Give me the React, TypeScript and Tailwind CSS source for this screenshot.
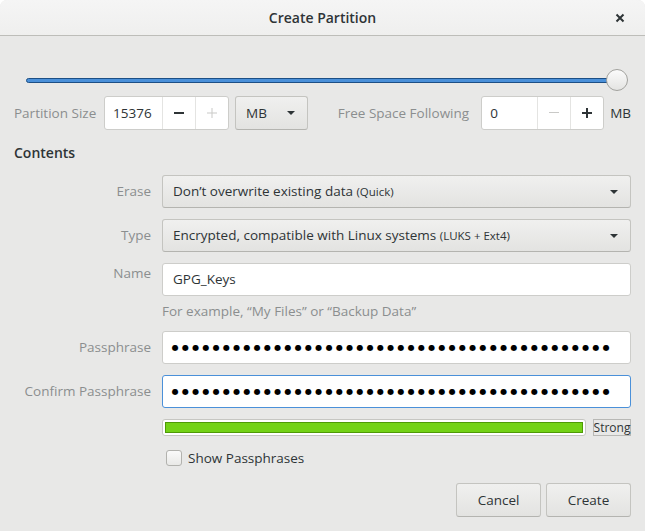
import React from "react";

const font = { fontFamily: '"Open Sans", "Noto Sans", sans-serif' };

function Minus({ dim }: { dim?: boolean }) {
  return (
    <svg width="12" height="12" viewBox="0 0 12 12">
      <rect x="1" y="5" width="10" height={dim ? 1 : 2} fill={dim ? "#c9c9c7" : "#2e3436"} />
    </svg>
  );
}
function Plus({ dim }: { dim?: boolean }) {
  const c = dim ? "#c9c9c7" : "#2e3436";
  const t = dim ? 1 : 2;
  return (
    <svg width="12" height="12" viewBox="0 0 12 12">
      <rect x="1" y={6 - t / 2} width="10" height={t} fill={c} />
      <rect x={6 - t / 2} y="1" width={t} height="10" fill={c} />
    </svg>
  );
}
function Arrow() {
  return (
    <svg width="10" height="6" viewBox="0 0 10 6">
      <path d="M1 1 L9 1 L5 5 Z" fill="#2e3436" />
    </svg>
  );
}

function Spin({ value, minusDim, plusDim, entryW }: { value: string; minusDim?: boolean; plusDim?: boolean; entryW: string }) {
  return (
    <div className="flex h-[34px] rounded-[3px] border border-[#cdcdca] bg-white">
      <div className={`${entryW} flex items-center pl-[8px] text-[#2e3436]`}>{value}</div>
      <div className="flex w-[33px] items-center justify-center border-l border-[#e4e4e2]">
        <Minus dim={minusDim} />
      </div>
      <div className="flex w-[33px] items-center justify-center border-l border-[#e4e4e2]">
        <Plus dim={plusDim} />
      </div>
    </div>
  );
}

function Combo({ children }: { children: React.ReactNode }) {
  return (
    <div className="flex h-[33px] flex-1 items-center justify-between rounded-[3px] border border-[#c4c4c0] border-b-[#b4b4b0] bg-gradient-to-b from-[#f0f0ef] to-[#e3e3e1] pl-[10px] pr-[11px] text-[#2e3436]">
      <div>{children}</div>
      <Arrow />
    </div>
  );
}

function Dots() {
  return (
    <div className="flex items-center" style={{ fontFamily: '"DejaVu Sans", sans-serif' }}>
      {Array.from({ length: 43 }).map((_, i) => (
        <span key={i} className="inline-block w-[10.27px] text-center text-[8px] leading-none text-black">
          ●
        </span>
      ))}
    </div>
  );
}

function Label({ children, top }: { children: React.ReactNode; top?: boolean }) {
  return (
    <div className={`w-[137px] shrink-0 text-right text-[#8b8e8f] ${top ? "self-start leading-[20px]" : ""}`}>
      {children}
    </div>
  );
}

export default function App() {
  return (
    <div className="flex h-[531px] w-[645px] flex-col overflow-hidden rounded-t-[7px] bg-[#e8e8e7] text-[13.5px] text-[#2e3436]" style={font}>
      {/* Header */}
      <div className="grid h-[36px] shrink-0 grid-cols-[1fr_auto_1fr] items-center border-b border-[#bdbdb9] bg-gradient-to-b from-[#f5f5f5] to-[#efefee]">
        <div />
        <div className="text-[14px] font-semibold text-[#2e3436]">Create Partition</div>
        <div className="flex justify-end pr-[20px]">
          <svg width="10" height="10" viewBox="0 0 10 10">
            <path d="M1.5 1.5 L8.5 8.5 M8.5 1.5 L1.5 8.5" stroke="#2e3436" strokeWidth="2" />
          </svg>
        </div>
      </div>

      <div className="flex flex-1 flex-col px-[14px]">
        {/* Slider */}
        <div className="mt-[33px] flex h-[22px] items-center pl-[12px] pr-[3px]">
          <div className="h-[5px] flex-1 rounded-full border border-[#1d4f85] bg-[#4a90d9]" />
          <div className="-ml-[6px] h-[22px] w-[22px] rounded-full border border-[#a2a29e] bg-gradient-to-b from-[#fbfbfb] to-[#e4e4e2]" />
        </div>

        {/* Size row */}
        <div className="mt-[5px] flex h-[34px] items-center">
          <div className="w-[90px] text-[#8b8e8f]">Partition Size</div>
          <Spin value="15376" plusDim entryW="w-[57px]" />
          <div className="ml-[6px] flex h-[34px] w-[73px] items-center justify-between rounded-[3px] border border-[#c4c4c0] border-b-[#b4b4b0] bg-gradient-to-b from-[#f0f0ef] to-[#e3e3e1] pl-[10px] pr-[11px]">
            <span>MB</span>
            <Arrow />
          </div>
          <div className="flex-1" />
          <div className="mr-[12px] text-[#8b8e8f]">Free Space Following</div>
          <Spin value="0" minusDim entryW="w-[55px]" />
          <div className="ml-[6px]">MB</div>
        </div>

        {/* Contents */}
        <div className="mt-[13px] text-[14px] font-semibold leading-[20px]">Contents</div>

        <div className="mt-[12px] flex flex-col">
          <div className="flex items-center">
            <Label>Erase</Label>
            <div className="ml-[11px] flex flex-1">
              <Combo>
                Don’t overwrite existing data <span className="text-[11.5px]">(Quick)</span>
              </Combo>
            </div>
          </div>

          <div className="mt-[11px] flex items-center">
            <Label>Type</Label>
            <div className="ml-[11px] flex flex-1">
              <Combo>
                Encrypted, compatible with Linux systems <span className="text-[11.5px]">(LUKS + Ext4)</span>
              </Combo>
            </div>
          </div>

          <div className="mt-[11px] flex">
            <Label top>Name</Label>
            <div className="ml-[11px] flex flex-1 flex-col">
              <div className="flex h-[33px] items-center rounded-[3px] border border-[#cdcdca] bg-white pl-[10px]">GPG_Keys</div>
              <div className="mt-[6px] leading-[18px] text-[#8b8e8f]">For example, “My Files” or “Backup Data”</div>
            </div>
          </div>

          <div className="mt-[11px] flex items-center">
            <Label>Passphrase</Label>
            <div className="ml-[11px] flex h-[33px] flex-1 items-center rounded-[3px] border border-[#cdcdca] bg-white pl-[7px]">
              <Dots />
            </div>
          </div>

          <div className="mt-[11px] flex items-center">
            <Label>Confirm Passphrase</Label>
            <div className="ml-[11px] flex h-[33px] flex-1 items-center rounded-[3px] border border-[#4a90d9] bg-white pl-[7px]">
              <Dots />
            </div>
          </div>

          <div className="mt-[11px] flex items-center">
            <div className="w-[137px] shrink-0" />
            <div className="ml-[11px] flex flex-1 items-center">
              <div className="h-[17px] flex-1 rounded-[3px] border border-[#c6c6c2] bg-white p-[2px]">
                <div className="h-full w-full border border-[#4e9a06] bg-[#73d216]" />
              </div>
              <div className="ml-[7px] flex h-[17px] w-[38px] items-center justify-center border border-[#b8b8b5] text-[12px] leading-none">
                Strong
              </div>
            </div>
          </div>

          <div className="mt-[12px] flex items-center">
            <div className="w-[137px] shrink-0" />
            <div className="ml-[15px] flex items-center">
              <div className="h-[16px] w-[16px] rounded-[3px] border border-[#b2b2ae] bg-gradient-to-b from-[#fafafa] to-[#e9e9e7]" />
              <span className="ml-[6px]">Show Passphrases</span>
            </div>
          </div>

          <div className="mt-[15px] flex justify-end gap-[5px]">
            <div className="flex h-[34px] w-[85px] items-center justify-center rounded-[3px] border border-[#c4c4c0] border-b-[#b4b4b0] bg-gradient-to-b from-[#f0f0ef] to-[#e3e3e1]">
              Cancel
            </div>
            <div className="flex h-[34px] w-[85px] items-center justify-center rounded-[3px] border border-[#c4c4c0] border-b-[#b4b4b0] bg-gradient-to-b from-[#f0f0ef] to-[#e3e3e1]">
              Create
            </div>
          </div>
        </div>
      </div>
    </div>
  );
}
